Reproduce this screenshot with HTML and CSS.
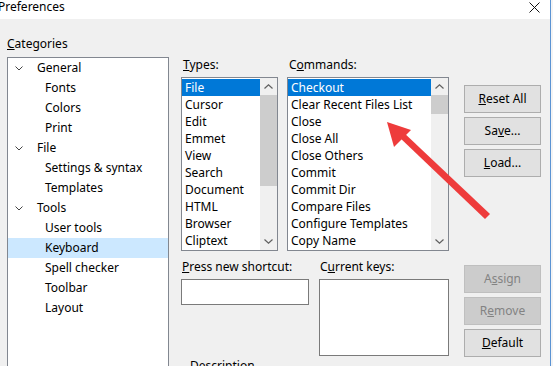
FILE: index.html
```html
<!DOCTYPE html>
<html lang="en">
<head>
    <meta charset="UTF-8">
    <meta name="viewport" content="width=device-width, initial-scale=1.0">
    <title>Preferences</title>
    <link rel="stylesheet" href="styles.css">
</head>
<body>

    <div class="window">
        <div class="titlebar">
            <span class="title">Preferences</span>
            <svg class="close" width="11" height="11" viewBox="0 0 11 11">
                <path d="M0.5 0.5 L10.5 10.5 M10.5 0.5 L0.5 10.5" stroke="#111" stroke-width="1" fill="none"/>
            </svg>
        </div>

        <div class="content">
            <!-- left: category tree -->
            <div class="categories">
                <div class="label"><u>C</u>ategories</div>
                <div class="tree">
                    <div class="node"><svg class="chev" width="8" height="5" viewBox="0 0 8 5"><path d="M0.5 0.5 L4 4 L7.5 0.5" stroke="#444" fill="none"/></svg>General</div>
                    <div class="leaf">Fonts</div>
                    <div class="leaf">Colors</div>
                    <div class="leaf">Print</div>
                    <div class="node"><svg class="chev" width="8" height="5" viewBox="0 0 8 5"><path d="M0.5 0.5 L4 4 L7.5 0.5" stroke="#444" fill="none"/></svg>File</div>
                    <div class="leaf">Settings &amp; syntax</div>
                    <div class="leaf">Templates</div>
                    <div class="node"><svg class="chev" width="8" height="5" viewBox="0 0 8 5"><path d="M0.5 0.5 L4 4 L7.5 0.5" stroke="#444" fill="none"/></svg>Tools</div>
                    <div class="leaf">User tools</div>
                    <div class="leaf active">Keyboard</div>
                    <div class="leaf">Spell checker</div>
                    <div class="leaf">Toolbar</div>
                    <div class="leaf">Layout</div>
                </div>
            </div>

            <!-- middle: types, commands, shortcut -->
            <div class="middle">
                <div class="lists">
                    <div class="types">
                        <div class="label"><u>T</u>ypes:</div>
                        <div class="listbox">
                            <div class="items">
                                <div class="item selected">File</div>
                                <div class="item">Cursor</div>
                                <div class="item">Edit</div>
                                <div class="item">Emmet</div>
                                <div class="item">View</div>
                                <div class="item">Search</div>
                                <div class="item">Document</div>
                                <div class="item">HTML</div>
                                <div class="item">Browser</div>
                                <div class="item">Cliptext</div>
                            </div>
                            <div class="scrollbar">
                                <svg class="sb-arrow" width="9" height="5" viewBox="0 0 9 5"><path d="M0.5 4.5 L4.5 0.8 L8.5 4.5" stroke="#606060" stroke-width="1.2" fill="none"/></svg>
                                <div class="thumb types-thumb"></div>
                                <div class="track"></div>
                                <svg class="sb-arrow" width="9" height="5" viewBox="0 0 9 5"><path d="M0.5 0.5 L4.5 4.2 L8.5 0.5" stroke="#606060" stroke-width="1.2" fill="none"/></svg>
                            </div>
                        </div>
                    </div>
                    <div class="commands">
                        <div class="label">C<u>o</u>mmands:</div>
                        <div class="listbox">
                            <div class="items">
                                <div class="item selected">Checkout</div>
                                <div class="item">Clear Recent Files List</div>
                                <div class="item">Close</div>
                                <div class="item">Close All</div>
                                <div class="item">Close Others</div>
                                <div class="item">Commit</div>
                                <div class="item">Commit Dir</div>
                                <div class="item">Compare Files</div>
                                <div class="item">Configure Templates</div>
                                <div class="item">Copy Name</div>
                            </div>
                            <div class="scrollbar">
                                <svg class="sb-arrow" width="9" height="5" viewBox="0 0 9 5"><path d="M0.5 4.5 L4.5 0.8 L8.5 4.5" stroke="#606060" stroke-width="1.2" fill="none"/></svg>
                                <div class="thumb commands-thumb"></div>
                                <div class="track"></div>
                                <svg class="sb-arrow" width="9" height="5" viewBox="0 0 9 5"><path d="M0.5 0.5 L4.5 4.2 L8.5 0.5" stroke="#606060" stroke-width="1.2" fill="none"/></svg>
                            </div>
                        </div>
                    </div>
                </div>

                <div class="keys">
                    <div class="shortcut">
                        <div class="label"><u>P</u>ress new shortcut:</div>
                        <div class="input"></div>
                    </div>
                    <div class="current">
                        <div class="label">C<u>u</u>rrent keys:</div>
                        <div class="keybox"></div>
                    </div>
                </div>

                <div class="description">Description</div>
            </div>

            <!-- right: buttons -->
            <div class="buttons">
                <div class="btn"><u>R</u>eset All</div>
                <div class="btn">Sa<u>v</u>e...</div>
                <div class="btn"><u>L</u>oad...</div>
                <div class="btn disabled spaced">A<u>s</u>sign</div>
                <div class="btn disabled">R<u>e</u>move</div>
                <div class="btn"><u>D</u>efault</div>
            </div>
        </div>

        <!-- red annotation arrow drawn over the dialog -->
        <svg class="annotation" width="553" height="366" viewBox="0 0 553 366">
            <polygon points="398,136 402,131 490,214 485,219" fill="#ee3b3b"/>
            <polygon points="387,122 411,130 394,147" fill="#ee3b3b"/>
        </svg>
    </div>

</body>
</html>
```

FILE: styles.css
```css
body {
    margin: 0;
    padding: 0;
    width: 553px;
    height: 366px;
    overflow: hidden;
    background-color: #f4f4f4;
    font-family: "Noto Sans", "Segoe UI", sans-serif;
    font-size: 12px;
    color: #000;
}
u {
    text-decoration: underline;
    text-underline-offset: 1px;
}
.window {
    position: relative;
    width: 550px;
    height: 366px;
    background-color: #f0f0f0;
    border-right: 1px solid #5b93d3;
}
.titlebar {
    height: 19px;
    background-color: white;
    display: flex;
    align-items: flex-start;
    justify-content: space-between;
}
.title {
    margin-left: -2px;
    line-height: 14px;
}
.close {
    margin-right: 10px;
    margin-top: 2px;
}
.content {
    display: flex;
    padding: 17px 0 0 7px;
}
.label {
    height: 16px;
    line-height: 16px;
    white-space: nowrap;
}

/* category tree */
.categories {
    width: 162px;
}
.categories .label {
    margin-bottom: 5px;
}
.tree {
    height: 320px;
    background-color: white;
    border: 1px solid #828790;
}
.node,
.leaf {
    height: 20px;
    line-height: 20px;
    white-space: nowrap;
}
.node {
    display: flex;
    align-items: center;
    padding-left: 7px;
}
.chev {
    margin-right: 14px;
}
.leaf {
    padding-left: 37px;
}
.leaf.active {
    background-color: #cce8ff;
}

/* middle column */
.middle {
    margin-left: 12px;
    padding-top: 21px;
}
.lists {
    display: flex;
    gap: 9px;
}
.lists .label {
    margin-left: 2px;
    margin-bottom: 4px;
}
.types {
    width: 97px;
}
.commands {
    width: 162px;
}
.listbox {
    display: flex;
    height: 172px;
    background-color: white;
    border: 1px solid #828790;
}
.items {
    flex: 1;
    padding-top: 1px;
    overflow: hidden;
}
.item {
    height: 17px;
    line-height: 17px;
    padding-left: 3px;
    white-space: nowrap;
}
.item.selected {
    background-color: #0078d7;
    color: white;
}
.scrollbar {
    width: 17px;
    display: flex;
    flex-direction: column;
    align-items: center;
    background-color: #f0f0f0;
}
.sb-arrow {
    flex: none;
    margin: 6px 0;
}
.thumb {
    width: 17px;
    background-color: #cdcdcd;
    flex: none;
}
.types-thumb {
    height: 91px;
}
.commands-thumb {
    height: 19px;
}
.track {
    flex: 1;
}

/* shortcut row */
.keys {
    display: flex;
    gap: 10px;
    margin-top: 8px;
}
.keys .label {
    margin-left: 1px;
    margin-bottom: 4px;
}
.shortcut {
    width: 128px;
}
.current {
    width: 130px;
}
.input {
    height: 24px;
    background-color: white;
    border: 1px solid #7a7a7a;
}
.keybox {
    height: 75px;
    background-color: white;
    border: 1px solid #7a7a7a;
}
.description {
    margin: 2px 0 0 9px;
    line-height: 16px;
}

/* buttons */
.buttons {
    width: 77px;
    margin-left: 15px;
    padding-top: 49px;
    display: flex;
    flex-direction: column;
    gap: 4px;
}
.btn {
    height: 26px;
    line-height: 26px;
    text-align: center;
    background-color: #e1e1e1;
    border: 1px solid #adadad;
}
.btn.disabled {
    background-color: #cccccc;
    border-color: #bfbfbf;
    color: #838383;
}
.btn.spaced {
    margin-top: 84px;
}

.annotation {
    position: absolute;
    left: 0;
    top: 0;
    pointer-events: none;
}
```
